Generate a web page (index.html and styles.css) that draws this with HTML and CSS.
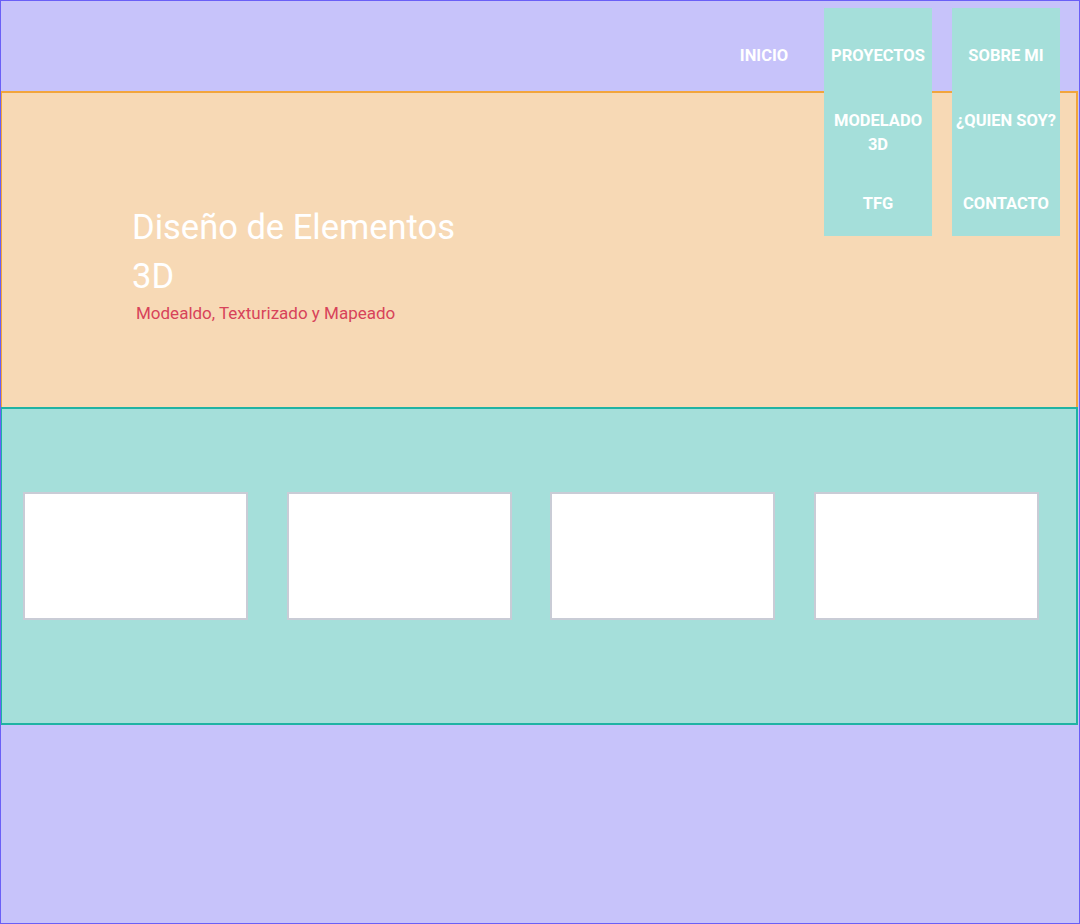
FILE: index.html
```html
<!DOCTYPE html>
<html lang="es">
<head>
<meta charset="utf-8">
<title>Diseño de Elementos 3D</title>
<link rel="stylesheet" href="styles.css">
</head>
<body>
<header class="site-header">
  <nav class="main-nav">
    <ul class="menu">
      <li class="menu-item menu-plain"><a class="menu-link" href="#">INICIO</a></li>
      <li class="menu-item has-sub">
        <a class="menu-link" href="#">PROYECTOS</a>
        <ul class="submenu">
          <li class="sub-item sub-first"><a class="sub-link" href="#">MODELADO<br>3D</a></li>
          <li class="sub-item sub-last"><a class="sub-link" href="#">TFG</a></li>
        </ul>
      </li>
      <li class="menu-item has-sub">
        <a class="menu-link" href="#">SOBRE MI</a>
        <ul class="submenu">
          <li class="sub-item sub-first"><a class="sub-link" href="#">¿QUIEN SOY?</a></li>
          <li class="sub-item sub-last"><a class="sub-link" href="#">CONTACTO</a></li>
        </ul>
      </li>
    </ul>
  </nav>
</header>

<section class="hero">
  <div class="hero-text">
    <h1 class="hero-title">Diseño de Elementos 3D</h1>
    <p class="hero-subtitle">Modealdo, Texturizado y Mapeado</p>
  </div>
</section>

<section class="gallery">
  <div class="card"></div>
  <div class="card"></div>
  <div class="card"></div>
  <div class="card"></div>
</section>
</body>
</html>
```

FILE: styles.css
```css
* {
  box-sizing: border-box;
}

html, body {
  margin: 0;
  padding: 0;
}

body {
  height: 924px;
  overflow: hidden;
  background: #c7c3fa;
  border: 1px solid #6a5ff6;
  font-family: Roboto, "Noto Sans", "Liberation Sans", sans-serif;
}

.site-header {
  height: 90px;
  position: relative;
  z-index: 2;
}

.main-nav {
  display: flex;
  justify-content: flex-end;
}

.menu {
  list-style: none;
  margin: 7px 19px 0 0;
  padding: 0;
  display: flex;
}

.menu-item {
  position: relative;
  width: 108px;
  height: 95px;
}

.menu-plain {
  margin-right: 6px;
}

.has-sub {
  background: #a5dfda;
}

.has-sub + .has-sub {
  margin-left: 20px;
}

.menu-link {
  display: block;
  height: 95px;
  line-height: 95px;
  text-align: center;
  color: #ffffff;
  text-decoration: none;
  font-weight: 700;
  font-size: 16.5px;
  white-space: nowrap;
}

.submenu {
  position: absolute;
  top: 95px;
  left: 0;
  width: 108px;
  list-style: none;
  margin: 0;
  padding: 0;
  background: #a5dfda;
}

.sub-item {
  padding-top: 6px;
  text-align: center;
}

.sub-first {
  height: 83px;
}

.sub-last {
  height: 50px;
}

.sub-link {
  display: block;
  color: #ffffff;
  text-decoration: none;
  font-weight: 700;
  font-size: 16.5px;
  line-height: 24px;
  white-space: nowrap;
}

.hero {
  margin-left: -1px;
  width: 1078px;
  height: 316px;
  background: #f7d9b5;
  border: 2px solid #f2a53c;
  border-bottom: none;
  padding: 110px 0 0 130px;
}

.hero-text {
  width: 350px;
}

.hero-title {
  margin: 0;
  font-size: 34.5px;
  font-weight: 400;
  line-height: 49px;
  color: #ffffff;
}

.hero-subtitle {
  margin: 0;
  padding-left: 4px;
  font-size: 17px;
  line-height: 24px;
  color: #d7435a;
}

.gallery {
  margin-left: -1px;
  width: 1078px;
  height: 318px;
  background: #a5dfda;
  border: 2px solid #1fb3a3;
  padding: 83px 0 0 21px;
  display: flex;
  align-items: flex-start;
  gap: 38.5px;
}

.card {
  width: 225px;
  height: 128px;
  background: #ffffff;
  border: 2px solid #c9ccd6;
  flex: none;
}
```
